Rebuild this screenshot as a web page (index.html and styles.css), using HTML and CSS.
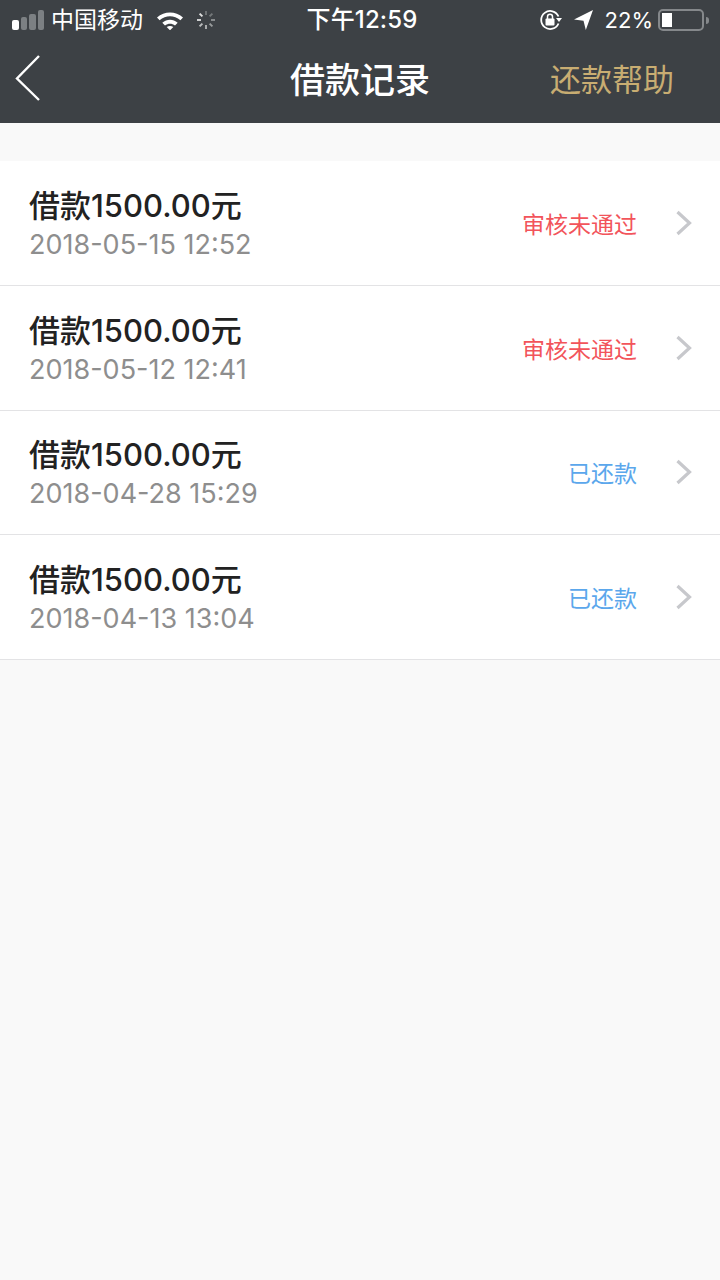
FILE: index.html
```html
<!DOCTYPE html>
<html lang="zh-CN">
<head>
<meta charset="utf-8">
<title>借款记录</title>
<link rel="stylesheet" href="styles.css">
</head>
<body>
<header class="top">
  <div class="status">
    <div class="status-left">
      <div class="signal"><i class="on"></i><i></i><i></i><i></i></div>
      <span class="carrier">中国移动</span>
      <svg class="wifi" width="28" height="20" viewBox="0 0 28 20"><path d="M1 7.500C8.500 .8 19.500 .8 27 7.500l-2.600 2.800C18.200 5 9.800 5 3.600 10.300z" fill="#fff"/><path d="M6.300 12.700c4.600-3.900 10.800-3.900 15.400 0L19 15.500c-3-2.300-7-2.300-10 0z" fill="#fff"/><path d="M10.700 17c2-1.400 4.600-1.400 6.600 0L14 20.300z" fill="#fff"/></svg>
      <svg class="spin" width="20" height="20" viewBox="0 0 20 20" stroke-width="2" fill="none"><path d="M10 1v4" stroke="#6d7173"/><path d="M16.400 3.600l-2.800 2.800" stroke="#74787a"/><path d="M19 10h-4" stroke="#888b8d"/><path d="M16.400 16.400l-2.800-2.800" stroke="#999c9d"/><path d="M10 19v-4" stroke="#aaacad"/><path d="M3.600 16.400l2.800-2.800" stroke="#bbbdbe"/><path d="M1 10h4" stroke="#cfd0d1"/><path d="M3.600 3.600l2.800 2.800" stroke="#e0e0e0"/></svg>
    </div>
    <div class="clock">下午12:59</div>
    <div class="status-right">
      <svg class="lock" width="24" height="22" viewBox="0 0 24 22" fill="none"><path d="M19.500 14.500A9 9 0 1 1 19.500 7.500" stroke="#fff" stroke-width="1.800"/><path d="M17 9h6l-3 4z" fill="#fff"/><rect x="6.500" y="9.500" width="9" height="7" rx="1" fill="#fff"/><path d="M8.500 10V7.800a2.500 2.500 0 0 1 5 0V10" stroke="#fff" stroke-width="1.500"/></svg>
      <svg class="loc" width="20" height="20" viewBox="0 0 20 20"><path d="M19 0L0 9.500l9.500 1.200L11.800 20z" fill="#fff"/></svg>
      <span class="pct">22%</span>
      <div class="battery"><div class="cell"><b></b></div><i class="nub"></i></div>
    </div>
  </div>
  <nav class="nav">
    <svg class="back" width="28" height="48" viewBox="0 0 28 48" fill="none"><path d="M25 2L3 24.500 25 46" stroke="#fff" stroke-width="2.400"/></svg>
    <h1 class="title">借款记录</h1>
    <a class="help">还款帮助</a>
  </nav>
</header>
<main class="list">
  <div class="row"><div class="info"><div class="amount">借款1500.00元</div><div class="date">2018-05-15 12:52</div></div><span class="state red">审核未通过</span><svg class="chev" width="18" height="26" viewBox="0 0 18 26" fill="none"><path d="M2.500 2L14.500 13 2.500 24" stroke="#c7c8cc" stroke-width="3.200"/></svg></div>
  <div class="row"><div class="info"><div class="amount">借款1500.00元</div><div class="date">2018-05-12 12:41</div></div><span class="state red">审核未通过</span><svg class="chev" width="18" height="26" viewBox="0 0 18 26" fill="none"><path d="M2.500 2L14.500 13 2.500 24" stroke="#c7c8cc" stroke-width="3.200"/></svg></div>
  <div class="row"><div class="info"><div class="amount">借款1500.00元</div><div class="date">2018-04-28 15:29</div></div><span class="state blue">已还款</span><svg class="chev" width="18" height="26" viewBox="0 0 18 26" fill="none"><path d="M2.500 2L14.500 13 2.500 24" stroke="#c7c8cc" stroke-width="3.200"/></svg></div>
  <div class="row"><div class="info"><div class="amount">借款1500.00元</div><div class="date">2018-04-13 13:04</div></div><span class="state blue">已还款</span><svg class="chev" width="18" height="26" viewBox="0 0 18 26" fill="none"><path d="M2.500 2L14.500 13 2.500 24" stroke="#c7c8cc" stroke-width="3.200"/></svg></div>
</main>
</body>
</html>
```
FILE: styles.css
```css
* { box-sizing: border-box; }
html, body { margin: 0; padding: 0; }
body {
  width: 720px;
  height: 1280px;
  overflow: hidden;
  background: #f9f9f9;
  font-family: "Inter", "Liberation Sans", "Noto Sans CJK SC", sans-serif;
}
.top { height: 123px; background: #3d4145; color: #fff; display: flex; flex-direction: column; }
.status { height: 40px; padding: 0 12px; display: grid; grid-template-columns: 1fr auto 1fr; align-items: center; }
.status-left { display: flex; align-items: center; }
.signal { display: flex; align-items: flex-end; gap: 2px; width: 32px; height: 20px; }
.signal i { width: 7px; background: #7c8083; border-radius: 2px; }
.signal i:nth-child(1) { height: 10px; background: #fff; }
.signal i:nth-child(2) { height: 13px; }
.signal i:nth-child(3) { height: 16px; }
.signal i:nth-child(4) { height: 20px; }
.carrier { margin-left: 7px; font-size: 23px; line-height: 40px; }
.wifi { margin-left: 13px; }
.spin { margin-left: 12px; }
.clock { font-size: 24px; font-weight: 500; line-height: 40px; letter-spacing: .15px; margin-left: 4px; }
.status-right { display: flex; align-items: center; justify-content: flex-end; margin-right: -1px; }
.lock { margin-right: 11px; }
.pct { margin-left: 11px; font-size: 22px; line-height: 40px; }
.battery { display: flex; align-items: center; margin-left: 5px; }
.cell { width: 46px; height: 22px; border: 2px solid #85888b; border-radius: 5px; padding: 2px; }
.cell b { display: block; width: 10px; height: 14px; background: #fff; }
.nub { width: 3px; height: 7px; background: #85888b; border-radius: 0 3px 3px 0; margin-left: 2px; }
.nav { height: 83px; padding: 0 46px 4px 14px; display: flex; align-items: center; justify-content: space-between; position: relative; }
.back { display: block; margin-bottom: 4px; }
.title { position: absolute; left: 0; right: 0; margin: 0; text-align: center; font-size: 35px; font-weight: 500; line-height: 80px; }
.help { font-size: 31px; color: #c8ad72; line-height: 80px; }
.list { margin-top: 38px; background: #fff; }
.row { height: 124.75px; padding: 0 27px 0 29px; display: flex; align-items: center; border-bottom: 1px solid #e3e3e5; }
.info { flex: 1; padding-top: 3px; }
.amount { font-size: 31px; line-height: 40px; font-weight: 500; color: #222; }
.date { font-size: 27px; line-height: 37px; color: #8e8e8e; }
.state { font-size: 23px; line-height: 30px; margin-top: 4px; }
.red { color: #f2545b; }
.blue { color: #5ba7ec; }
.chev { margin-left: 38px; }
```
